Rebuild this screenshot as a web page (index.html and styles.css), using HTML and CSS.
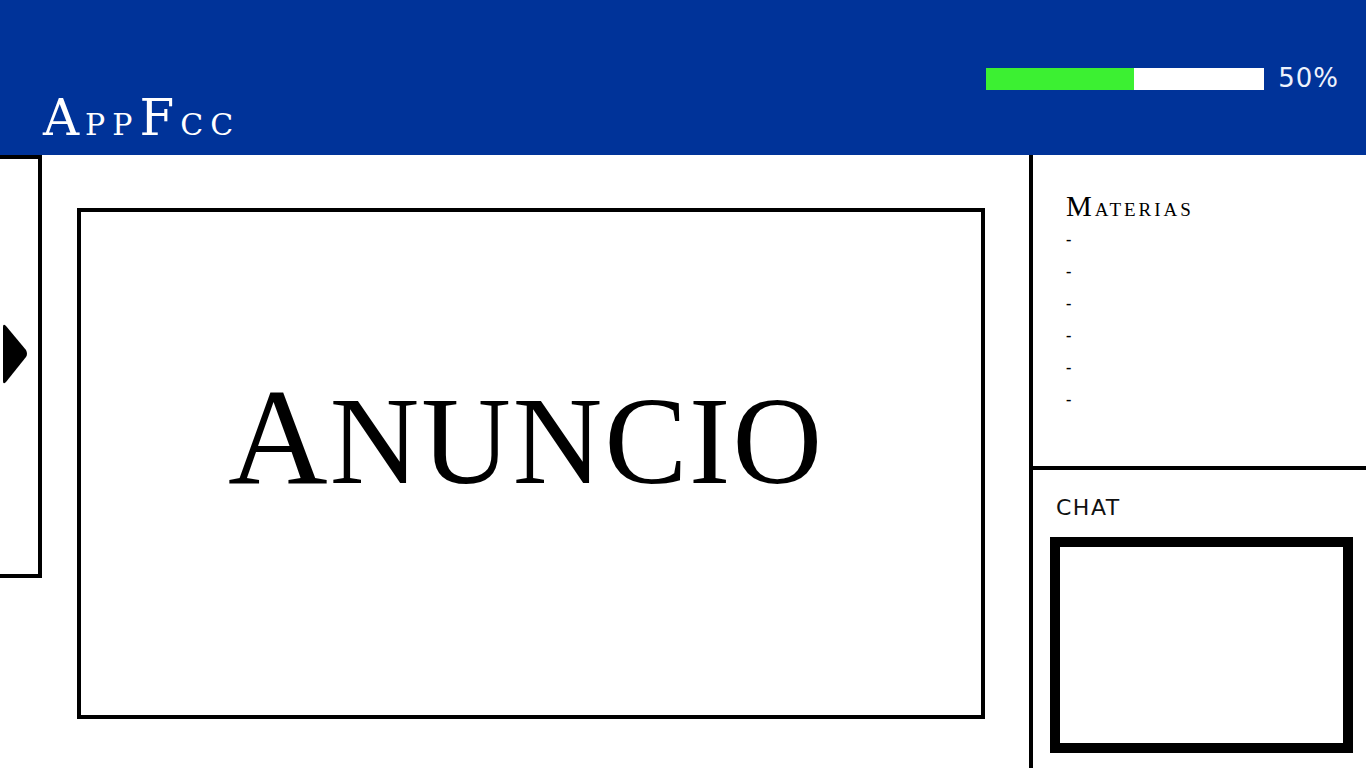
FILE: index.html
```html
<!DOCTYPE html>
<html lang="es">
<head>
<meta charset="utf-8">
<title>AppFcc</title>
<link rel="stylesheet" href="styles.css">
</head>
<body>
<header class="topbar">
  <div class="logo"><span class="logo-big">A</span><span class="logo-small">PP</span><span class="logo-big">F</span><span class="logo-small">CC</span></div>
  <div class="progress">
    <div class="track"><div class="fill" style="width:53%"></div></div>
    <span class="pct">50%</span>
  </div>
</header>
<div class="layout">
  <aside class="drawer">
    <svg class="arrow" width="28" height="62" viewBox="0 0 28 62"><path d="M3 4 Q3 0 6 3 L26 27 Q28 31 26 34 L6 59 Q3 62 3 58 Z" fill="#000"/></svg>
  </aside>
  <main class="content">
    <div class="ad">
      <div class="ad-title"><span class="ad-big">A</span><span class="ad-small">NUNCIO</span></div>
    </div>
  </main>
  <aside class="sidebar">
    <section class="materias">
      <h2 class="sec-title"><span class="m-big">M</span><span class="m-small">ATERIAS</span></h2>
      <ul class="list">
        <li>-</li>
        <li>-</li>
        <li>-</li>
        <li>-</li>
        <li>-</li>
        <li>-</li>
      </ul>
    </section>
    <section class="chat">
      <h2 class="chat-title">CHAT</h2>
      <div class="chat-box"></div>
    </section>
  </aside>
</div>
</body>
</html>
```

FILE: styles.css
```css
html, body {
  margin: 0;
  padding: 0;
}
body {
  width: 1366px;
  height: 768px;
  overflow: hidden;
  background: #fff;
  color: #000;
  font-family: "Liberation Serif", "DejaVu Serif", serif;
}

/* Header */
.topbar {
  height: 155px;
  box-sizing: border-box;
  background: #003399;
  display: flex;
  justify-content: space-between;
  padding: 0 27px 0 43px;
}
.logo {
  align-self: flex-end;
  margin-bottom: 3px;
  color: #fff;
  font-family: "DejaVu Serif", "Liberation Serif", serif;
  font-size: 50px;
  line-height: 54px;
  letter-spacing: 6px;
}
.logo-big { font-size: 50px; }
.logo-small { font-size: 30px; letter-spacing: 7px; }

.progress {
  align-self: flex-start;
  margin-top: 68px;
  display: flex;
  align-items: flex-start;
  gap: 14px;
}
.track {
  width: 278px;
  height: 22px;
  background: #fff;
}
.fill {
  height: 100%;
  background: #3cf032;
}
.pct {
  font-family: "DejaVu Sans", sans-serif;
  font-size: 26px;
  line-height: 22px;
  margin-top: -1px;
  letter-spacing: 1px;
  color: #eef2fc;
}

/* Body layout */
.layout {
  display: flex;
  height: 613px;
}
.drawer {
  width: 38px;
  height: 251px;
  border: 4px solid #000;
  border-left: none;
  padding-top: 164px;
}
.arrow {
  display: block;
}

.content {
  flex: 1;
  padding: 53px 0 0 35px;
}
.ad {
  width: 908px;
  height: 511px;
  box-sizing: border-box;
  border: 4px solid #000;
  display: flex;
  justify-content: center;
  padding: 156px 10px 0 0;
}
.ad-title {
  line-height: 138px;
  font-size: 138px;
  white-space: nowrap;
  letter-spacing: 2px;
}
.ad-big { font-size: 138px; }
.ad-small { font-size: 124px; }

/* Sidebar */
.sidebar {
  width: 337px;
  box-sizing: border-box;
  border-left: 4px solid #000;
  display: flex;
  flex-direction: column;
}
.materias {
  height: 311px;
  box-sizing: border-box;
  padding: 37px 0 0 33px;
}
.sec-title {
  margin: 0;
  font-weight: normal;
  font-size: 29px;
  line-height: 29px;
  letter-spacing: 3px;
}
.m-big { font-size: 29px; }
.m-small { font-size: 19px; }
.list {
  list-style: none;
  margin: 0;
  padding: 0;
}
.list li {
  font-size: 16px;
  line-height: 32px;
  font-weight: bold;
}

.chat {
  flex: 1;
  border-top: 4px solid #000;
  padding: 27px 0 0 17px;
}
.chat-title {
  margin: 0 0 0 6px;
  font-family: "DejaVu Sans", sans-serif;
  font-weight: normal;
  font-size: 22px;
  line-height: 22px;
  letter-spacing: 1.5px;
  color: #111;
}
.chat-box {
  margin-top: 18px;
  width: 303px;
  height: 216px;
  box-sizing: border-box;
  border: 10px solid #000;
}
```
